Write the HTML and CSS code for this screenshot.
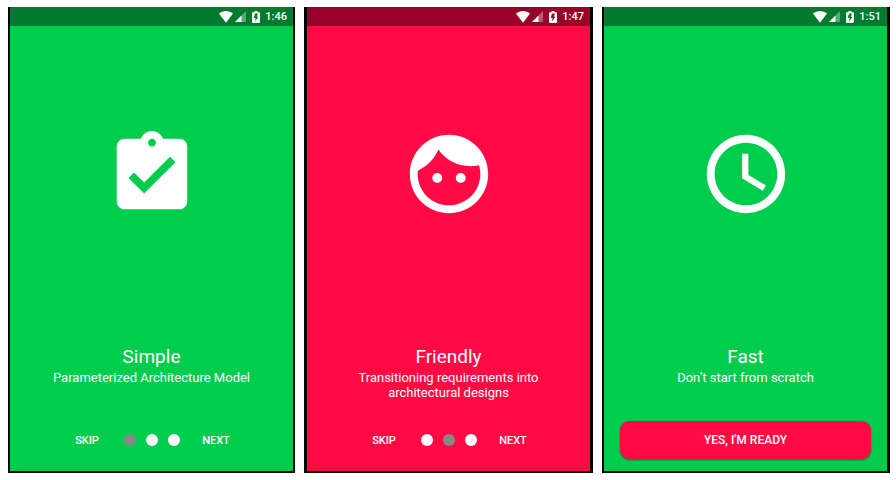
FILE: index.html
```html
<!DOCTYPE html>
<html lang="en">
<head>
<meta charset="utf-8">
<meta name="viewport" content="width=device-width, initial-scale=1">
<title>Onboarding screens</title>
<link rel="stylesheet" href="styles.css">
</head>
<body>
<svg class="defs" aria-hidden="true">
  <symbol id="wifi" viewBox="0 0 14 12"><path d="M7 0C4.400 0 2 .9 0 2.500l7 9.300L14 2.500C12 .9 9.600 0 7 0z"/></symbol>
  <symbol id="signal" viewBox="0 0 11 11"><path class="faint" d="M0 11h11V0z"/><path d="M0 11h6.500V4.500z"/></symbol>
  <symbol id="battery" viewBox="0 0 8 12"><path fill-rule="evenodd" d="M2.500 0h3v1.200H7a1 1 0 0 1 1 1V11a1 1 0 0 1-1 1H1a1 1 0 0 1-1-1V2.200a1 1 0 0 1 1-1h1.500zM6 2.500H3L1.800 7h1.900l-1 3.800L6.500 5.700H4.800z"/></symbol>
</svg>
<main class="screens">
  <section class="screen screen-simple">
    <div class="status">
      <svg class="wifi"><use href="#wifi"/></svg>
      <svg class="signal"><use href="#signal"/></svg>
      <svg class="battery"><use href="#battery"/></svg>
      <time>1:46</time>
    </div>
    <div class="hero">
      <svg viewBox="0 0 24 24"><path d="M19 3h-4.180C14.400 1.840 13.300 1 12 1c-1.300 0-2.400.84-2.820 2H5c-1.100 0-2 .9-2 2v14c0 1.100.9 2 2 2h14c1.100 0 2-.9 2-2V5c0-1.100-.9-2-2-2zm-7 0c.55 0 1 .45 1 1s-.45 1-1 1-1-.45-1-1 .45-1 1-1zm-2 14l-4-4 1.410-1.410L10 14.170l6.590-6.590L18 9l-8 8z"/></svg>
    </div>
    <div class="copy">
      <h2>Simple</h2>
      <p>Parameterized Architecture Model</p>
    </div>
    <div class="actions">
      <button class="text-button" type="button">SKIP</button>
      <div class="dots"><span class="dot current"></span><span class="dot"></span><span class="dot"></span></div>
      <button class="text-button" type="button">NEXT</button>
    </div>
  </section>
  <section class="screen screen-friendly">
    <div class="status">
      <svg class="wifi"><use href="#wifi"/></svg>
      <svg class="signal"><use href="#signal"/></svg>
      <svg class="battery"><use href="#battery"/></svg>
      <time>1:47</time>
    </div>
    <div class="hero">
      <svg viewBox="0 0 24 24"><path d="M9 11.750c-.69 0-1.250.56-1.250 1.250s.56 1.250 1.250 1.250 1.250-.56 1.250-1.250-.56-1.250-1.250-1.250zm6 0c-.69 0-1.250.56-1.250 1.250s.56 1.250 1.250 1.250 1.250-.56 1.250-1.250-.56-1.250-1.250-1.250zM12 2C6.480 2 2 6.480 2 12s4.480 10 10 10 10-4.480 10-10S17.520 2 12 2zm0 18c-4.410 0-8-3.590-8-8 0-.29.02-.58.05-.86 2.360-1.050 4.230-2.980 5.210-5.370C11.070 8.330 14.050 10 17.420 10c.78 0 1.530-.09 2.250-.26.21.71.33 1.470.33 2.260 0 4.410-3.590 8-8 8z"/></svg>
    </div>
    <div class="copy">
      <h2>Friendly</h2>
      <p>Transitioning requirements into architectural designs</p>
    </div>
    <div class="actions">
      <button class="text-button" type="button">SKIP</button>
      <div class="dots"><span class="dot"></span><span class="dot current"></span><span class="dot"></span></div>
      <button class="text-button" type="button">NEXT</button>
    </div>
  </section>
  <section class="screen screen-fast">
    <div class="status">
      <svg class="wifi"><use href="#wifi"/></svg>
      <svg class="signal"><use href="#signal"/></svg>
      <svg class="battery"><use href="#battery"/></svg>
      <time>1:51</time>
    </div>
    <div class="hero">
      <svg viewBox="0 0 24 24"><path d="M11.990 2C6.470 2 2 6.480 2 12s4.470 10 9.990 10C17.520 22 22 17.520 22 12S17.520 2 11.990 2zM12 20c-4.420 0-8-3.580-8-8s3.580-8 8-8 8 3.580 8 8-3.580 8-8 8zm.6-13.200H11V13.100l5.250 3.150.85-1.330-4.500-2.670z"/></svg>
    </div>
    <div class="copy">
      <h2>Fast</h2>
      <p>Don’t start from scratch</p>
    </div>
    <div class="actions">
      <button class="ready-button" type="button">YES, I'M READY</button>
    </div>
  </section>
</main>
</body>
</html>
```
FILE: styles.css
```css
* {
  box-sizing: border-box;
}

body {
  margin: 0;
  background: #fff;
  color: #fff;
  font-family: Roboto, "Liberation Sans", sans-serif;
}

.defs {
  display: none;
}

.screens {
  display: grid;
  grid-template-columns: 287fr 289fr 288fr;
  gap: 9px;
  min-height: 100vh;
  padding: 7px 6px 7px 8px;
}

.screen {
  display: flex;
  flex-direction: column;
  border: solid #000;
  border-width: 0 2px 2px;
  background: #00cc4e;
}

.screen-friendly {
  border-width: 0 3px 2px;
  background: #ff0a43;
}

.screen-fast {
  border-right-width: 3px;
}

.status {
  display: flex;
  align-items: center;
  justify-content: flex-end;
  height: 19px;
  padding-right: 6px;
  background: #007a2f;
}

.screen-friendly .status {
  background: #990027;
}

.status svg {
  fill: #fff;
}

.faint {
  opacity: 0.35;
}

.wifi {
  width: 14px;
  height: 12px;
  margin-right: 2px;
}

.signal {
  width: 11px;
  height: 11px;
  margin-right: 6px;
}

.battery {
  width: 8px;
  height: 12px;
  margin-right: 5px;
}

.status time {
  font-size: 11px;
  font-weight: 500;
  line-height: 19px;
}

.hero {
  display: flex;
  flex: 1;
  align-items: center;
  justify-content: center;
}

.hero svg {
  width: 94px;
  height: 94px;
  fill: #fff;
}

.copy {
  min-height: 99px;
  padding: 23px 48px 0;
  text-align: center;
}

.screen-simple .copy {
  padding-right: 32px;
  padding-left: 32px;
}

.copy h2 {
  margin: 0 0 1px;
  font-size: 19px;
  font-weight: 400;
  line-height: 24px;
}

.copy p {
  margin: 0;
  font-size: 13px;
  line-height: 15px;
}

.actions {
  display: flex;
  align-items: center;
  justify-content: center;
  height: 38px;
  margin: 0 16px 12px;
}

button {
  padding: 0;
  border: 0;
  color: inherit;
  font-family: inherit;
  font-weight: 500;
}

.text-button {
  width: 73px;
  height: 38px;
  background: none;
  font-size: 11px;
}

.dots {
  display: flex;
  gap: 10px;
}

.dot {
  width: 12px;
  height: 12px;
  border-radius: 50%;
  background: #fff;
}

.dot.current {
  background: #888;
}

.ready-button {
  flex: 1;
  height: 38px;
  border-radius: 9px;
  background: #ff0a43;
  box-shadow: 0 1px 2px rgba(0, 0, 0, 0.4);
  font-size: 12px;
}
```
